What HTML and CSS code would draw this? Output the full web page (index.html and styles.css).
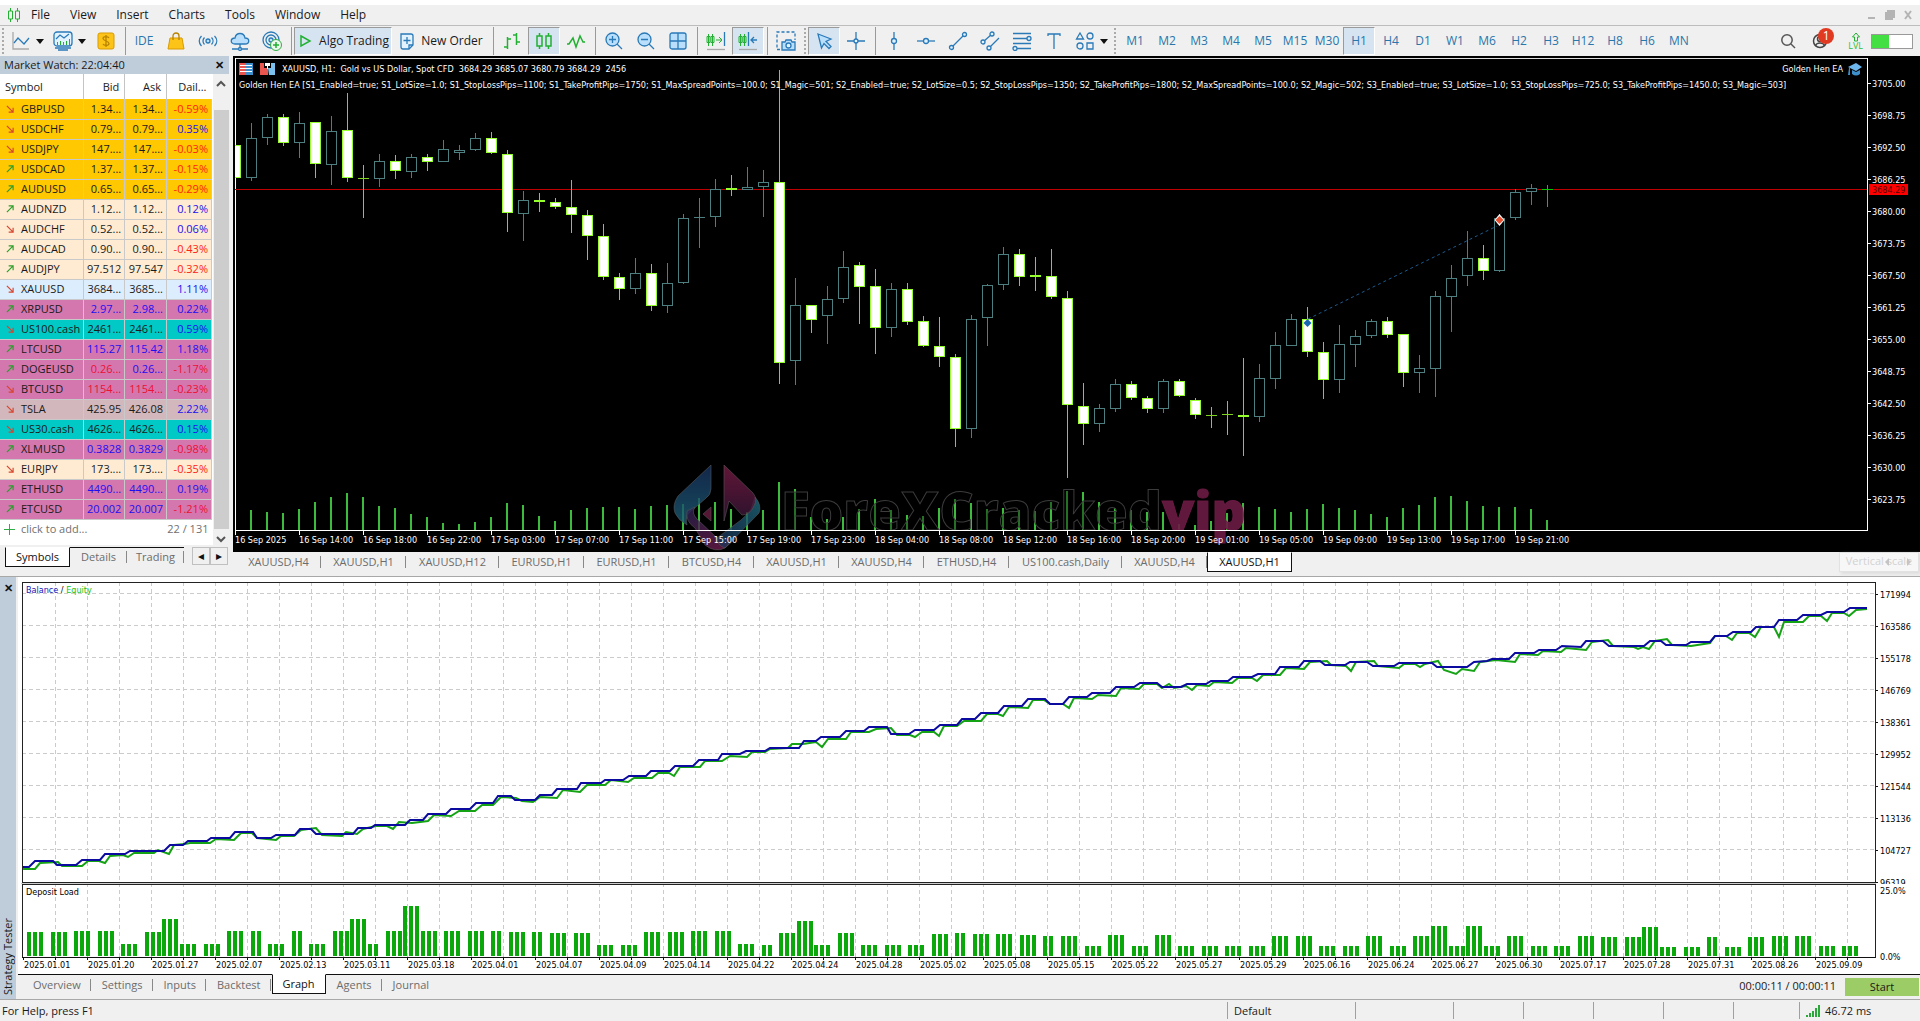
FILE: index.html
```html
<!DOCTYPE html>
<html lang="en">
<head>
<meta charset="utf-8">
<title>XAUUSD,H1</title>
<link rel="stylesheet" href="styles.css">
</head>
<body>
<div class="title-strip"></div>

<nav class="menu-bar" aria-label="Main menu">
  <svg class="app-icon" width="14" height="16" viewBox="0 0 14 16"><path class="g" d="M3.500 1v3M3.500 12v3M10.500 1v3M10.500 12v3M1.500 4h4v8h-4zM8.500 4h4v8h-4z"/></svg>
  <button>File</button><button>View</button><button>Insert</button><button>Charts</button><button>Tools</button><button>Window</button><button>Help</button>
  <div class="window-controls">
    <svg width="12" height="12" viewBox="0 0 12 12"><path d="M2 9h7"/></svg>
    <svg width="12" height="12" viewBox="0 0 12 12"><path d="M2 4h6v6h-6zM4 4V2h6v6h-2M4 6h2v2h-2z"/></svg>
    <svg width="12" height="12" viewBox="0 0 12 12"><path d="M3 2l6 8M9 2l-6 8"/></svg>
  </div>
</nav>

<div class="toolbar" role="toolbar">
  <span class="grip"></span>
  <button class="tool drop" aria-label="Chart type"><svg width="20" height="20" viewBox="0 0 20 20"><path class="n" d="M2 1v17h16"/><path class="b" d="M3 12l4-5 6 6 5-6"/></svg><i class="caret"></i></button>
  <button class="tool drop" aria-label="Indicators"><svg width="20" height="20" viewBox="0 0 20 20"><rect class="bw" x="1" y="1" width="18" height="14" rx="3"/><path class="b" d="M3 8l4-4 4 3 5-4M2 17h16M5 19h10"/><path class="g" d="M4.500 14v-3M7.500 14v-4M10.500 14v-3M13.500 14v-4M16.500 14v-6"/></svg><i class="caret"></i></button>
  <button class="tool" aria-label="Deposit"><svg width="20" height="20" viewBox="0 0 20 20"><rect class="y" x="2" y="2" width="16" height="16" rx="2"/><path class="o" d="M13 7c-1-2-6-2-6 .5S13 10 13 12.500 8 15 7 13M10 4v12"/></svg></button>
  <span class="sep"></span>
  <button class="tool ide">IDE</button>
  <button class="tool" aria-label="Market"><svg width="20" height="20" viewBox="0 0 20 20"><path class="y" d="M4 7h12l2 11H2z"/><path class="o" d="M7 9V5c0-4 6-4 6 0v4"/></svg></button>
  <button class="tool" aria-label="Signals"><svg width="20" height="20" viewBox="0 0 20 20"><circle class="bl" cx="10" cy="10" r="2"/><path class="b" d="M6.500 6.500c-2 2-2 5 0 7M13.500 6.500c2 2 2 5 0 7M3.500 5c-3 3-3 7 0 10M16.500 5c3 3 3 7 0 10"/></svg></button>
  <button class="tool" aria-label="Cloud"><svg width="20" height="20" viewBox="0 0 20 20"><path class="bl" d="M5 13c-5 0-5-6 0-6 1-6 9-6 10 0 5 0 5 6 0 6z"/><path class="b" d="M10 13v4M2 18h6M12 18h6"/><circle class="bl" cx="10" cy="18" r="1.500"/></svg></button>
  <button class="tool" aria-label="Virtual hosting"><svg width="20" height="20" viewBox="0 0 20 20"><circle class="b" cx="9" cy="9" r="8"/><circle class="b" cx="9" cy="9" r="5"/><circle class="bl" cx="9" cy="9" r="2"/><circle cx="14" cy="14" r="5.500" fill="#eef9ee" stroke="#2fae45"/><path class="g2" d="M14 11v6M11 14h6"/></svg></button>
  <span class="sep"></span>
  <button class="tool wide active"><svg width="16" height="18" viewBox="0 0 16 18"><path class="g2" d="M4 4l9 5-9 5z" fill="#e6f8e8"/></svg>Algo Trading</button>
  <button class="tool wide"><svg width="16" height="18" viewBox="0 0 16 18"><path class="bw" d="M2 2h10q2 0 2 2v9l-4 4H4q-2 0-2-2z"/><path class="b" d="M8 5v7M4.500 8.500h7M10 17v-4h4"/></svg>New Order</button>
  <span class="sep"></span>
  <button class="tool" aria-label="Bar chart"><svg width="20" height="20" viewBox="0 0 20 20"><path class="g2" d="M5.500 6v12M2 16h3.500M5.500 8H9M14.500 2v12M11 4h3.500M14.500 11H18"/></svg></button>
  <button class="tool active" aria-label="Candlesticks"><svg width="20" height="20" viewBox="0 0 20 20"><path class="g2" d="M5.500 2v3M5.500 15v3M14.500 2v3M14.500 15v3M3 5h5v10H3zM12 5h5v10h-5z"/></svg></button>
  <button class="tool" aria-label="Line chart"><svg width="20" height="20" viewBox="0 0 20 20"><path class="g2" d="M1 13l2 0 4-6 3 9 4-11 3 6h2"/></svg></button>
  <span class="sep"></span>
  <button class="tool" aria-label="Zoom in"><svg width="20" height="20" viewBox="0 0 20 20"><circle class="bl" cx="8.500" cy="8.500" r="6.500"/><path class="b" d="M8.500 5v7M5 8.500h7M13 13l5 5"/></svg></button>
  <button class="tool" aria-label="Zoom out"><svg width="20" height="20" viewBox="0 0 20 20"><circle class="bl" cx="8.500" cy="8.500" r="6.500"/><path class="b" d="M5 8.500h7M13 13l5 5"/></svg></button>
  <button class="tool" aria-label="Tile windows"><svg width="20" height="20" viewBox="0 0 20 20"><rect class="bl" x="2" y="2" width="16" height="16" rx="2"/><path class="b" d="M10 2v16M2 10h16"/></svg></button>
  <span class="sep"></span>
  <button class="tool" aria-label="Auto scroll"><svg width="20" height="20" viewBox="0 0 20 20"><path class="g" d="M2.500 3v12M6.500 3v12M1 5.500h3v6H1zM5 5.500h3v6H5zM10 9h6M13 6l3 3-3 3"/><path class="b" d="M18.500 1v14"/><path class="n" d="M1 18.500h18"/></svg></button>
  <button class="tool active" aria-label="Chart shift"><svg width="20" height="20" viewBox="0 0 20 20"><path class="g" d="M2.500 3v12M6.500 3v12M1 5.500h3v6H1zM5 5.500h3v6H5z"/><path class="b" d="M10.500 1v14M13 9h6M16 6l-3 3 3 3"/><path class="n" d="M1 18.500h18"/></svg></button>
  <span class="sep"></span>
  <button class="tool" aria-label="Screenshot"><svg width="20" height="20" viewBox="0 0 20 20"><path class="b" stroke-dasharray="3 2" d="M4 18.500H1V1h18v8"/><path class="bl" d="M6 11h3l1-2h5l1 2h3v8H6z"/><circle class="bw" cx="12.500" cy="14.500" r="2.500"/></svg></button>
  <span class="grip"></span>
  <button class="tool active" aria-label="Cursor"><svg width="20" height="20" viewBox="0 0 20 20"><path class="bl" d="M4 3l13 5-5 2.500 5 5-2 2-5-5L7.500 17z"/></svg></button>
  <button class="tool" aria-label="Crosshair"><svg width="20" height="20" viewBox="0 0 20 20"><path class="b" d="M10 1v18M1 10h18"/><circle class="bw" cx="10" cy="10" r="2"/></svg></button>
  <span class="sep"></span>
  <button class="tool" aria-label="Vertical line"><svg width="20" height="20" viewBox="0 0 20 20"><path class="b" d="M10 1v18"/><circle class="bw" cx="10" cy="10" r="2.500"/></svg></button>
  <button class="tool" aria-label="Horizontal line"><svg width="20" height="20" viewBox="0 0 20 20"><path class="b" d="M1 10h18"/><circle class="bw" cx="10" cy="10" r="2.500"/></svg></button>
  <button class="tool" aria-label="Trend line"><svg width="20" height="20" viewBox="0 0 20 20"><path class="b" d="M4 16L16 4"/><circle class="bw" cx="3.500" cy="16.500" r="2"/><circle class="bw" cx="16.500" cy="3.500" r="2"/></svg></button>
  <button class="tool" aria-label="Channel"><svg width="20" height="20" viewBox="0 0 20 20"><path class="b" d="M3 11l9-8M9 17L19 7"/><circle class="bw" cx="3" cy="11" r="2"/><circle class="bw" cx="12" cy="3" r="2"/><circle class="bw" cx="9" cy="17" r="2"/></svg></button>
  <button class="tool" aria-label="Fibonacci"><svg width="20" height="20" viewBox="0 0 20 20"><path class="b" d="M1 2.500h18M1 7.500h18M1 12.500h18M1 17.500h18"/><circle class="bw" cx="17" cy="7.500" r="2"/><circle class="bw" cx="3" cy="17.500" r="2"/></svg></button>
  <button class="tool" aria-label="Text"><svg width="20" height="20" viewBox="0 0 20 20"><path class="b" d="M4 5V3h12v2M10 3v15"/></svg></button>
  <button class="tool drop" aria-label="Objects"><svg width="20" height="20" viewBox="0 0 20 20"><path class="b" d="M5 2l3.500 6h-7zM12 12h6v6h-6z"/><circle class="b" cx="15" cy="5" r="3"/><circle class="b" cx="5" cy="15" r="3"/></svg><i class="caret"></i></button>
  <span class="grip"></span>
  <div class="timeframes">
    <button>M1</button><button>M2</button><button>M3</button><button>M4</button><button>M5</button><button>M15</button><button>M30</button><button class="active">H1</button><button>H4</button><button>D1</button><button>W1</button><button>M6</button><button>H2</button><button>H3</button><button>H12</button><button>H8</button><button>H6</button><button>MN</button>
  </div>
  <div class="account">
    <svg width="16" height="16" viewBox="0 0 16 16"><g fill="none" stroke="#555" stroke-width="1.500"><circle cx="7" cy="7" r="5.200"/><path d="M11 11l4 4"/></g></svg>
    <span class="profile"><svg width="16" height="16" viewBox="0 0 16 16"><g fill="none" stroke="#444" stroke-width="1.500"><circle cx="8" cy="8" r="6.500"/><circle cx="8" cy="6" r="2.500"/><path d="M3.500 13c1-4 8-4 9 0"/></g></svg><b class="badge">1</b></span>
    <span class="level"><svg width="10" height="10" viewBox="0 0 10 10"><path class="g" d="M3.500 9V5H1.500L5 1l3.500 4h-2v4z"/></svg>LVL</span>
    <span class="battery"><i></i></span>
  </div>
</div>

<main class="workspace">
  <section class="market">
    <header class="panel-title"><span>Market Watch: 22:04:40</span><button class="close" aria-label="Close Market Watch">✕</button></header>
    <div class="quotes">
      <table>
        <thead><tr><th class="c-symbol">Symbol</th><th>Bid</th><th>Ask</th><th class="c-daily">Dail...</th></tr></thead>
        <tbody id="quotes"></tbody>
        <tfoot><tr><td><i class="plus"></i>click to add...</td><td colspan="3">22 / 131</td></tr></tfoot>
      </table>
      <div class="scrollbar"><svg width="10" height="8" viewBox="0 0 10 8"><path d="M1 6l4-4 4 4"/></svg><span class="thumb"></span><svg width="10" height="8" viewBox="0 0 10 8"><path d="M1 2l4 4 4-4"/></svg></div>
    </div>
    <div class="market-tabs">
      <button class="tab selected">Symbols</button><button class="tab">Details</button><button class="tab">Trading</button>
      <div class="pager"><button aria-label="Previous tab">◂</button><button aria-label="Next tab">▸</button></div>
    </div>
  </section>

  <section class="chart-pane">
    <div class="chart">
      <svg id="price-chart" class="plot"></svg>
      <div class="chart-info">
        <div class="info-row">
          <svg width="14" height="12" viewBox="0 0 14 12"><path fill="#e8564f" d="M0 0h7v12H0z"/><path fill="#3d8fcc" d="M7 0h7v12H7z"/><path stroke="#fff" d="M1 2.500h12M1 5.500h12M1 8.500h12"/></svg>
          <svg width="15" height="12" viewBox="0 0 15 12"><path fill="#e8564f" d="M0 0h4v5h4v7H0z"/><path fill="#7cc0ee" d="M8 5h3V0h4v12H9z"/><path fill="#fff" d="M5 0h5v3H8v3H7V3H5z"/></svg>
          <span class="info-text">XAUUSD, H1:&nbsp; Gold vs US Dollar, Spot CFD&nbsp; 3684.29 3685.07 3680.79 3684.29&nbsp; 2456</span>
          <span class="expert">Golden Hen EA <svg width="14" height="13" viewBox="0 0 14 13"><path fill="#6db7ee" d="M0 4l8-4 6 4-6 4z"/><path fill="#3d8fcc" d="M4 7l4 2 4-2v4q-4 3-8 0zM1 5h1v7H0z"/></svg></span>
        </div>
        <div class="info-text">Golden Hen EA [S1_Enabled=true; S1_LotSize=1.0; S1_StopLossPips=1100; S1_TakeProfitPips=1750; S1_MaxSpreadPoints=100.0; S1_Magic=501; S2_Enabled=true; S2_LotSize=0.5; S2_StopLossPips=1350; S2_TakeProfitPips=1800; S2_MaxSpreadPoints=100.0; S2_Magic=502; S3_Enabled=true; S3_LotSize=1.0; S3_StopLossPips=725.0; S3_TakeProfitPips=1450.0; S3_Magic=503]</div>
      </div>
    </div>
    <div class="chart-tabs">
      <button class="tab">XAUUSD,H4</button><button class="tab">XAUUSD,H1</button><button class="tab long">XAUUSD,H12</button><button class="tab">EURUSD,H1</button><button class="tab">EURUSD,H1</button><button class="tab">BTCUSD,H4</button><button class="tab">XAUUSD,H1</button><button class="tab">XAUUSD,H4</button><button class="tab">ETHUSD,H4</button><button class="tab daily">US100.cash,Daily</button><button class="tab">XAUUSD,H4</button><button class="tab selected">XAUUSD,H1</button>
      <span class="ghost-tip">Vertical scale<svg width="28" height="8" viewBox="0 0 28 8"><path d="M5 0v8L1 4zM23 0v8l4-4z"/></svg></span>
    </div>
  </section>
</main>

<section class="tester">
  <aside class="tester-side"><button class="close" aria-label="Close Strategy Tester">✕</button><span>Strategy Tester</span></aside>
  <div class="tester-body">
    <div class="tester-plot"><svg id="tester-chart" class="plot"></svg></div>
    <div class="tester-tabs">
      <button class="tab">Overview</button><button class="tab">Settings</button><button class="tab">Inputs</button><button class="tab">Backtest</button><button class="tab selected">Graph</button><button class="tab">Agents</button><button class="tab last">Journal</button>
      <span class="elapsed">00:00:11 / 00:00:11</span><button class="start">Start</button>
    </div>
  </div>
</section>

<footer class="status">
  <span class="help">For Help, press F1</span>
  <span class="s128">Default</span><span class="s98"></span><span class="s70"></span><span class="s70"></span><span class="s70"></span><span class="s70"></span><span class="s66"></span>
  <span class="ping"><svg width="14" height="12" viewBox="0 0 14 12"><path stroke="#2aa83a" stroke-width="2" d="M1 12v-2M4 12V8M7 12V6M10 12V3M13 12V0"/></svg>46.72 ms</span>
</footer>
<script src="app.js"></script>
</body>
</html>
```
FILE: styles.css
```css
* { box-sizing: border-box; }
body {
  margin: 0;
  height: 100vh;
  min-height: 800px;
  display: flex;
  flex-direction: column;
  background: #f0f0f0;
  color: #1a1a1a;
  font: 11px/16px "Open Sans", "Noto Sans", sans-serif;
  overflow: hidden;
}
button {
  margin: 0;
  padding: 0;
  border: 0;
  background: none;
  color: inherit;
  font: inherit;
  white-space: nowrap;
}
svg { flex: none; }

.title-strip { height: 5px; background: #fff; flex: none; }

/* menu */
.menu-bar {
  height: 21px;
  flex: none;
  display: flex;
  align-items: center;
  padding-left: 7px;
  border-bottom: 1px solid #bdbdbd;
}
.menu-bar button { padding: 0 10px; font-size: 12px; }
.window-controls { margin-left: auto; display: flex; gap: 6px; padding-right: 6px; }
.window-controls svg { fill: none; stroke: #b4b4b4; stroke-width: 2; }

/* toolbar */
.toolbar {
  height: 30px;
  flex: none;
  display: flex;
  align-items: stretch;
  padding: 1px 0;
  font-size: 12px;
}
.tool {
  width: 32px;
  display: flex;
  align-items: center;
  justify-content: center;
  border: 1px solid transparent;
}
.drop { width: 42px; gap: 5px; }
.wide { width: 98px; gap: 6px; }
.ide { color: #2a76ab; }
.active { background: #d6e4f1; border-color: #9a9a9a #fff #fff #9a9a9a; }
.sep { width: 6px; background: linear-gradient(#999, #999) center / 1px 100% no-repeat; }
.grip { width: 6px; margin: 1px 0; background: repeating-linear-gradient(#aaa 0 2px, transparent 2px 4px) center / 2px 100% no-repeat; }
.caret { border: 4px solid transparent; border-top: 5px solid #111; border-bottom: 0; }
.timeframes { display: flex; margin-left: 1px; }
.timeframes button { width: 32px; color: #2a76ab; border: 1px solid transparent; }
.timeframes .active { border-color: #9a9a9a #fff #fff #9a9a9a; }
.account { margin-left: auto; display: flex; align-items: center; padding-right: 7px; gap: 16px; }
.profile { position: relative; display: flex; }
.badge {
  position: absolute;
  left: 6px;
  top: -5px;
  width: 16px;
  height: 16px;
  border-radius: 50%;
  background: #e03a22;
  color: #fff;
  font-weight: 400;
  text-align: center;
  line-height: 16px;
}
.level { display: flex; flex-direction: column; align-items: center; color: #2fbf3a; font-size: 9px; line-height: 8px; margin-left: 4px; }
.battery { width: 42px; height: 15px; border: 1px solid #999; background: #fff; display: flex; margin-left: -8px; }
.battery i { width: 42%; background: #43df43; }

.b, .bl, .bw, .g, .g2, .n, .o { fill: none; stroke: #2a7ab8; stroke-width: 1.3; }
.bl { fill: #b9dffc; }
.bw { fill: #e3f2ff; }
.g { stroke: #22b032; stroke-width: 1; }
.g2 { stroke: #22b032; stroke-width: 1.5; }
.n { stroke: #a9a9a9; }
.y { fill: #fcc419; stroke: #d99b00; }
.o { stroke: #b88300; }

/* workspace */
.workspace { flex: 521 1 0; min-height: 0; display: flex; border-bottom: 1px solid #a8a8a8; }
.market { width: 233px; flex: none; display: flex; flex-direction: column; padding-right: 4px; }
.panel-title {
  height: 18px;
  flex: none;
  display: flex;
  align-items: center;
  justify-content: space-between;
  padding: 0 5px 0 4px;
  background: #bfcddb;
}
.close { color: #111; font-weight: 700; font-size: 11px; line-height: 14px; }
.quotes { flex: 1; min-height: 0; display: flex; background: #fff; overflow: hidden; margin-bottom: 2px; }
table { width: 212px; border-collapse: collapse; table-layout: fixed; align-self: flex-start; }
th { height: 25px; font-weight: 400; text-align: right; padding: 0 5px; border-right: 1px solid #c4c4c4; }
th:last-child { border-right: 0; }
.c-symbol { width: 83px; text-align: left; }
.c-daily { width: 45px; }
td { height: 20px; padding: 0 3px; text-align: right; border: 0 solid #c9c9c9; border-width: 0 1px 1px 0; white-space: nowrap; line-height: 14px; }
tbody td:first-child { text-align: left; padding-left: 6px; }
td svg { width: 8px; height: 8px; margin-right: 7px; fill: none; stroke-width: 1.3; }
.major td { background: #ffc800; }
.minor td { background: #ffebd2; }
.metal td { background: #dcedfd; }
.crypto td { background: #d377ae; }
.index td { background: #00c9c6; }
.stock td { background: #d2b8bc; }
tbody .up { color: #1c0ff0; }
tbody .down { color: #ff2213; }
.crypto .down { color: #ee0f35; }
tfoot td { border: 0; color: #707070; height: 20px; }
tfoot td:first-child { text-align: left; padding-left: 4px; }
.plus { display: inline-block; width: 11px; height: 11px; margin-right: 6px; vertical-align: -2px; background: linear-gradient(#2fae45, #2fae45) center / 100% 1px no-repeat, linear-gradient(#2fae45, #2fae45) center / 1px 100% no-repeat; }
.scrollbar { width: 16px; margin-left: 1px; background: #f0f0f0; display: flex; flex-direction: column; align-items: center; padding: 6px 0 2px; gap: 6px; }
.scrollbar svg { fill: none; stroke: #555; stroke-width: 2; }
.thumb { flex: 1; width: 15px; background: #cdcdcd; margin: 16px 0 0; }

.tab { color: #6c6c6c; height: 20px; }
.tab.selected { background: #fff; color: #111; border: 1px solid #111; border-top-color: #fff; }
.market-tabs { height: 29px; flex: none; display: flex; align-items: flex-start; padding-left: 5px; }
.market-tabs .tab { width: 57px; box-shadow: inset 0 1px #111; }
.market-tabs .selected { width: 65px; box-shadow: none; }
.pager { margin-left: auto; display: flex; margin-right: 1px; }
.pager button { width: 18px; height: 18px; border: 1px solid #c0c0c0; color: #111; font-size: 12px; line-height: 14px; font-family: "DejaVu Sans", sans-serif; }

.chart-pane { flex: 1; min-width: 0; display: flex; flex-direction: column; }
.chart { flex: 1; min-height: 0; background: #000; position: relative; }
.plot { display: block; width: 100%; height: 100%; }
.chart-info { position: absolute; left: 6px; right: 58px; top: 5px; color: #fff; font-family: "DejaVu Sans Condensed", "DejaVu Sans", sans-serif; font-size: 9px; }
.info-row { display: flex; align-items: center; gap: 7px; height: 16px; }
.info-text { white-space: pre; }
.expert { margin-left: auto; display: flex; align-items: center; gap: 5px; }
.chart-tabs { height: 24px; flex: none; display: flex; padding-left: 3px; }
.chart-tabs .tab { width: 85px; }
.chart-tabs .long { width: 93px; }
.chart-tabs .daily { width: 113px; }
.chart-tabs .tab, .market-tabs .tab, .tester-tabs .tab { background-image: linear-gradient(#888, #888); background-size: 1px 12px; background-position: right center; background-repeat: no-repeat; }
.chart-tabs .tab.selected, .market-tabs .tab.selected, .tester-tabs .tab.selected, .tester-tabs .last { background-image: none; }
.ghost-tip {
  position: relative;
  margin-left: auto;
  width: 80px;
  height: 20px;
  margin-right: 1px;
  background: #f7f7f7;
  border: 1px solid #e2e2e2;
  box-shadow: 2px 2px 3px #ddd;
  color: #d2d2d2;
  text-align: center;
}
.ghost-tip svg { position: absolute; right: 6px; top: 5px; fill: #c4c4c4; }

/* tester */
.tester { flex: 423 1 0; min-height: 0; display: flex; border-bottom: 1px solid #a8a8a8; }
.tester-side { width: 16px; margin-right: 2px; background: #bfcddb; display: flex; flex-direction: column; align-items: center; justify-content: space-between; padding: 4px 0; }
.tester-side span { writing-mode: vertical-rl; transform: rotate(180deg); }
.tester-body { flex: 1; min-width: 0; display: flex; flex-direction: column; }
.tester-plot { flex: 1; min-height: 0; background: #fff; }
.tester-tabs { height: 25px; flex: none; display: flex; align-items: flex-start; gap: 1px; padding: 0 1px 0 5px; border-top: 1px solid #111; }
.tester-tabs .tab { padding: 0 10px; }
.tester-tabs .selected { margin-top: -1px; height: 20px; }
.elapsed { margin: 3px 8px 0 auto; }
.start { width: 74px; height: 18px; margin-top: 3px; background: #9ccc65; }

/* status bar */
.status { height: 21px; flex: none; display: flex; align-items: center; line-height: 17px; }
.status span { height: 17px; }
.status .help { flex: 1; padding-left: 2px; }
.status span + span { border-left: 1px solid #a0a0a0; padding-left: 6px; }
.s128 { width: 128px; }
.s98 { width: 98px; }
.s70 { width: 70px; }
.s66 { width: 66px; }
.ping { width: 121px; display: flex; align-items: center; gap: 5px; }

/* svg text */
svg text { font: 9px "DejaVu Sans Condensed", "DejaVu Sans", sans-serif; }
#price-chart text { fill: #fff; }
#price-chart .mark { font: 800 53px "Open Sans", sans-serif; fill: #000; fill-opacity: 0.4; stroke: #3c3c3c; stroke-width: 1; }
#price-chart .mark-vip { fill: #6b1b44; fill-opacity: 0.9; stroke: #6b1b44; }
```
FILE: app.js
```js
const quotes = [
  ['major', 0, 'GBPUSD', '1.34...', '1.34...', '-0.59%'],
  ['major', 0, 'USDCHF', '0.79...', '0.79...', '0.35%'],
  ['major', 0, 'USDJPY', '147....', '147....', '-0.03%'],
  ['major', 1, 'USDCAD', '1.37...', '1.37...', '-0.15%'],
  ['major', 1, 'AUDUSD', '0.65...', '0.65...', '-0.29%'],
  ['minor', 1, 'AUDNZD', '1.12...', '1.12...', '0.12%'],
  ['minor', 0, 'AUDCHF', '0.52...', '0.52...', '0.06%'],
  ['minor', 1, 'AUDCAD', '0.90...', '0.90...', '-0.43%'],
  ['minor', 1, 'AUDJPY', '97.512', '97.547', '-0.32%'],
  ['metal', 0, 'XAUUSD', '3684...', '3685...', '1.11%'],
  ['crypto', 1, 'XRPUSD', '2.97...', '2.98...', '0.22%', 'up', 'up'],
  ['index', 0, 'US100.cash', '2461...', '2461...', '0.59%'],
  ['crypto', 1, 'LTCUSD', '115.27', '115.42', '1.18%', 'up', 'up'],
  ['crypto', 1, 'DOGEUSD', '0.26...', '0.26...', '-1.17%', 'down', 'up'],
  ['crypto', 0, 'BTCUSD', '1154...', '1154...', '-0.23%', 'down', 'down'],
  ['stock', 0, 'TSLA', '425.95', '426.08', '2.22%'],
  ['index', 0, 'US30.cash', '4626...', '4626...', '0.15%'],
  ['crypto', 1, 'XLMUSD', '0.3828', '0.3829', '-0.98%', 'up', 'up'],
  ['minor', 0, 'EURJPY', '173....', '173....', '-0.35%'],
  ['crypto', 1, 'ETHUSD', '4490...', '4490...', '0.19%', 'up', 'up'],
  ['crypto', 1, 'ETCUSD', '20.002', '20.007', '-1.21%', 'up', 'up'],
];
document.getElementById('quotes').innerHTML = quotes.map(([kind, rising, name, bid, ask, daily, bc = '', ac = '']) => {
  const arrow = rising
    ? '<svg viewBox="0 0 9 9" stroke="#2b9e2b"><path d="M1 8l7-7M3 1h5v5"/></svg>'
    : '<svg viewBox="0 0 9 9" stroke="#d8452e"><path d="M1 1l7 7M8 3v5H3"/></svg>';
  return `<tr class="${kind}"><td>${arrow}${name}</td><td class="${bc}">${bid}</td><td class="${ac}">${ask}</td><td class="${daily[0] === '-' ? 'down' : 'up'}">${daily}</td></tr>`;
}).join('');

// Candles: kind (f falling, r rising, d doji), body top, body bottom, high, low
const candles = `f 145 178 145 178|r 138 178 123 181|r 117 138 114 145|f 117 143 114 146|r 123 143 112 158|f 122 164 122 178|r 131 165 116 185|f 130 178 93 182|d 178 179 165 218|r 161 179 154 187|f 161 171 155 179|r 157 172 154 178|f 157 162 154 171|r 149 162 140 162|r 150 153 145 160|r 138 150 133 151|f 138 153 132 154|f 154 213 150 232|r 200 214 191 241|f 200 202 193 212|f 202 207 198 209|f 207 215 180 233|f 215 236 210 260|f 236 277 224 280|f 277 289 273 300|r 273 289 258 294|f 273 306 264 311|r 283 306 263 313|r 218 283 214 284|r 217 217 198 248|r 189 217 179 227|f 188 190 175 196|r 187 190 167 190|r 182 187 170 217|f 182 363 70 384|r 305 361 278 385|f 305 320 305 333|r 299 316 286 344|r 267 299 251 303|f 265 287 262 324|f 286 328 269 354|r 289 328 283 337|f 289 322 283 325|f 321 346 316 347|f 346 357 317 367|f 357 429 354 447|r 319 429 315 438|r 285 318 284 346|r 254 285 247 290|f 254 277 249 286|f 275 277 257 291|f 276 297 249 299|f 298 405 291 478|f 406 424 383 445|r 408 424 404 432|r 384 409 379 412|f 384 398 381 400|f 398 409 396 413|r 381 409 379 413|f 381 396 379 397|f 400 415 398 419|d 415 415 407 428|d 414 414 401 435|f 415 417 358 456|r 378 417 364 422|r 345 379 332 389|r 319 346 314 346|f 319 352 307 357|f 352 380 342 399|r 344 380 325 393|r 336 345 330 367|r 321 336 319 338|f 321 335 317 338|f 334 373 334 387|r 368 373 355 393|r 296 369 291 397|r 278 297 265 332|r 258 276 231 286|f 258 271 245 280|r 218 271 214 272|r 192 218 189 220|r 188 192 184 205|g 189 189 185 207`
  .split('|').map(s => s.split(' '));
const volumes = [0,20,18,17,21,28,33,37,33,24,22,16,13,7,6,8,13,27,25,14,9,20,22,23,23,21,24,25,26,32,28,21,18,20,48,41,13,11,13,21,31,20,15,14,22,31,27,21,22,20,19,28,39,38,28,22,20,18,18,6,5,9,17,27,23,21,18,21,26,22,20,16,13,22,25,33,34,29,24,23,23,21,10];
const barDates = ['16 Sep 2025','16 Sep 14:00','16 Sep 18:00','16 Sep 22:00','17 Sep 03:00','17 Sep 07:00','17 Sep 11:00','17 Sep 15:00','17 Sep 19:00','17 Sep 23:00','18 Sep 04:00','18 Sep 08:00','18 Sep 12:00','18 Sep 16:00','18 Sep 20:00','19 Sep 01:00','19 Sep 05:00','19 Sep 09:00','19 Sep 13:00','19 Sep 17:00','19 Sep 21:00'];

const rect = (x, y, w, h, fill, extra = '') => `<rect x="${x}" y="${y}" width="${w}" height="${h}" fill="${fill}" ${extra}/>`;
const text = (x, y, s, extra = '') => `<text x="${x}" y="${y}" ${extra}>${s}</text>`;

function drawPrice() {
  const svg = document.getElementById('price-chart');
  const { width: W, height: H } = svg.getBoundingClientRect();
  const Y = v => Math.round((v - 56) * H / 496);
  const left = 2, right = Math.round(W) - 53, base = Y(530);
  let out = '';
  out += rect(left, 2, right - left, 1, '#ddd') + rect(left, 2, 1, base - 2, '#fff');
  out += rect(left, Y(189), right - left, 1, '#c00000');
  volumes.forEach((v, i) => { if (v) out += rect(left + i * 16 - 1, base - v, 2, v, '#3dbb3d'); });
  candles.forEach(([k, t, b, h, l], i) => {
    const x = left + i * 16, top = Y(t), bh = Math.max(Y(b) - top, 1);
    const line = k === 'r' ? '#4e7f80' : k === 'g' ? '#0c0' : '#7fd421';
    out += rect(x, Y(h), 1, Math.max(Y(l) - Y(h), 1), line);
    if (k === 'd' || k === 'g' || bh < 2) out += rect(x - 5, top, 11, bh, line);
    else out += `<rect x="${x - 4.5}" y="${top + .5}" width="10" height="${bh - 1 || 1}" fill="${k === 'f' ? '#fff' : '#000'}" stroke="${k === 'f' ? '#96ff2e' : '#4e7f80'}"/>`;
  });
  out += rect(0, 0, 2, H, '#000');
  out += `<path d="M1075 ${Y(319)}L1264 ${Y(226)}" stroke="#1d5a8e" stroke-dasharray="3 3"/>`;
  out += `<path d="M1074.500 ${Y(319)}l4 4-4 4-4-4z" fill="#1767b0"/><path d="M1266.500 ${Y(214)}l5 6-5 6-5-6z" fill="#fff"/><path d="M1266.500 ${Y(216)}l4 4-4 4-4-4z" fill="#e4502f"/>`;
  out += `<g transform="translate(440 ${Y(530) - 67})" stroke="#555" stroke-width=".6" fill-opacity=".8">
    <path fill="url(#teal)" d="M38 2L5 33Q-1 42 2 50Q5 57 14 62Q12 54 16 50L32 36Q38 32 38 26Z"/>
    <path fill="url(#rose)" d="M14 48Q12 58 22 65L32 82Q42 90 52 85L62 76L44 75L24 56Q18 50 22 44Z"/>
    <path fill="url(#teal2)" d="M82 34Q89 42 86 50L52 85Q44 82 44 75L68 57Q74 52 78 46Z"/>
    <path fill="url(#wine)" d="M51 2L80 30Q85 36 81 43Q77 52 69 52L56 38L51 58Z"/>
    <path fill="#6b1b44" d="M30 51L38 44V58Z"/></g>
    <defs><linearGradient id="teal" x2="0" y2="1"><stop stop-color="#17305e"/><stop offset="1" stop-color="#1c6074"/></linearGradient>
    <linearGradient id="rose" x2="1" y2="1"><stop stop-color="#2a2352"/><stop offset="1" stop-color="#7c1c4c"/></linearGradient>
    <linearGradient id="teal2" x1="0" x2="1" y1="1" y2="0"><stop stop-color="#1c2c52"/><stop offset="1" stop-color="#1c6b7c"/></linearGradient>
    <linearGradient id="wine" x2="0" y2="1"><stop stop-color="#7a1c44"/><stop offset="1" stop-color="#351638"/></linearGradient></defs>`;
  out += `<text class="mark" x="548" y="${base}">ForeXCracked<tspan class="mark-vip">vip</tspan></text>`;
  out += rect(left, base, right - left + 1, 1, '#fff') + rect(right, 2, 1, base - 2, '#fff');
  barDates.forEach((d, i) => { out += rect(left + i * 64, base, 1, 5, '#fff') + text(left + i * 64, base + 13, d); });
  for (let i = 0; i < 14; i++) {
    const y = Y(83 + i * 32);
    out += rect(right, y, 4, 1, '#fff') + text(right + 5, y + 4, (3705 - i * 6.25).toFixed(2));
  }
  out += rect(right + 2, Y(184), 39, 11, '#f00') + text(right + 5, Y(189) + 4, '3684.29', 'style="fill:#500"');
  svg.innerHTML = `<g>${out}</g>`;
}

const balance = '23,867 29,867 35,861 53,861 57,865 76,865 82,860 100,860 105,854 125,854 130,851 164,851 170,845 183,845 188,841 207,841 211,838 230,838 235,832 253,832 257,838 271,838 276,835 295,835 300,829 311,829 316,834 353,834 358,828 371,828 375,825 405,825 410,820 423,820 428,814 446,814 451,809 470,809 476,803 493,803 498,796 511,796 515,800 535,800 540,795 552,795 557,789 577,789 581,783 601,783 605,780 623,780 629,776 646,776 651,771 670,771 675,766 693,766 699,760 718,760 722,754 740,754 746,751 765,751 770,748 799,748 804,741 816,741 821,737 840,737 846,731 864,731 869,727 887,727 891,734 909,734 915,730 934,730 940,725 957,725 962,719 975,719 981,713 998,713 1004,706 1022,706 1028,699 1045,699 1050,704 1063,704 1069,697 1087,697 1092,693 1110,693 1116,687 1134,687 1140,683 1157,683 1162,687 1181,687 1187,684 1206,684 1211,681 1228,681 1233,677 1252,677 1258,674 1275,674 1280,667 1299,667 1304,661 1320,661 1325,665 1345,665 1350,662 1367,662 1373,666 1394,666 1399,663 1432,663 1437,667 1467,667 1474,662 1487,661 1492,659 1509,659 1515,653 1534,653 1539,650 1556,650 1562,646 1581,647 1586,641 1603,641 1609,646 1644,646 1650,641 1661,641 1666,645 1686,645 1691,642 1710,642 1715,636 1727,636 1733,632 1751,632 1756,627 1774,627 1779,620 1797,620 1803,615 1821,615 1827,612 1844,612 1850,608 1867,608';
const equity = '23,869 35,869 40,863 58,862 62,866 82,866 88,861 99,861 105,863 110,856 123,855 128,857 134,853 154,853 158,850 169,854 174,845 185,844 190,843 210,843 216,839 234,840 241,833 252,833 257,838 276,840 281,836 294,836 301,830 316,828 322,835 342,836 346,832 357,834 363,829 376,826 387,826 393,829 399,822 412,823 428,821 434,815 451,816 459,811 475,811 482,805 493,805 501,797 516,798 522,801 533,802 540,797 557,798 563,790 580,792 587,785 605,785 611,780 628,782 634,778 652,778 658,773 669,773 674,776 680,767 700,767 705,761 722,761 730,756 747,757 752,752 765,752 770,749 788,748 792,744 803,744 816,742 822,747 828,739 846,739 851,732 869,732 876,729 891,728 897,735 910,735 915,737 922,732 934,732 939,736 944,726 957,726 964,721 981,721 987,714 998,714 1003,716 1009,707 1028,708 1033,700 1044,700 1050,704 1063,704 1069,708 1074,698 1092,699 1098,695 1116,696 1121,688 1139,689 1144,684 1157,684 1162,688 1169,684 1174,688 1186,686 1192,690 1197,685 1209,686 1214,682 1232,683 1238,678 1252,678 1257,681 1263,675 1280,675 1286,668 1304,669 1310,662 1327,661 1331,665 1346,666 1351,671 1356,662 1374,661 1378,666 1399,668 1404,664 1415,664 1420,667 1425,664 1438,661 1444,670 1456,674 1462,669 1474,671 1480,662 1496,660 1515,662 1520,654 1538,655 1543,651 1561,652 1566,648 1586,650 1592,642 1608,640 1613,646 1634,647 1638,649 1643,647 1649,649 1655,641 1667,639 1672,645 1691,646 1710,643 1715,636 1726,636 1732,640 1737,633 1749,633 1755,637 1761,627 1774,627 1779,637 1784,622 1803,622 1809,616 1821,616 1827,621 1832,613 1844,613 1849,616 1856,610 1867,609';
// Deposit load groups: left, bars, height
const load = '27,3,24;51,3,24;74,3,25;98,3,25;121,3,12;145,3,24;162,3,37;180,3,12;204,3,12;227,3,25;251,2,25;268,3,12;292,2,25;309,3,12;333,3,25;350,3,37;368,2,12;386,3,25;403,3,50;421,3,25;444,3,25;468,3,25;491,2,25;509,3,24;532,2,24;550,3,23;574,3,23;597,3,11;621,3,11;644,3,24;668,3,24;691,3,25;715,3,25;738,3,12;762,2,11;779,3,23;797,3,35;814,3,11;838,3,23;861,3,11;885,3,11;908,3,11;932,3,22;955,2,23;973,3,22;996,3,22;1020,3,21;1043,2,20;1061,3,20;1085,3,10;1108,3,21;1132,3,10;1155,3,21;1178,3,10;1202,3,10;1225,3,10;1249,3,10;1272,3,20;1296,3,20;1319,3,10;1343,3,10;1366,3,20;1390,3,10;1413,3,20;1431,3,30;1449,3,10;1466,3,30;1484,3,10;1507,3,20;1531,3,10;1554,3,10;1578,3,20;1601,3,19;1625,3,19;1642,3,29;1660,3,9;1684,3,9;1707,2,19;1725,3,9;1748,3,19;1772,3,20;1795,3,20;1819,3,10;1842,3,10'
  .split(';').map(s => s.split(',').map(Number));
const testDates = '01.01 01.20 01.27 02.07 02.13 03.11 03.18 04.01 04.07 04.09 04.14 04.22 04.24 04.28 05.02 05.08 05.15 05.22 05.27 05.29 06.16 06.24 06.27 06.30 07.17 07.28 07.31 08.26 09.09'.split(' ');
const levels = [171994, 163586, 155178, 146769, 138361, 129952, 121544, 113136, 104727, 96319];

function drawTester() {
  const svg = document.getElementById('tester-chart');
  const { width: W, height: H } = svg.getBoundingClientRect();
  const X = v => Math.round((v - 18) * W / 1902);
  const Y = v => Math.round((v - 577) * H / 397);
  const L = X(22), R = X(1875), top = Y(582), mid = Y(882), mid2 = Y(884), base = Y(957);
  const pts = s => s.split(' ').map(p => { const [x, y] = p.split(',').map(Number); return `${X(x)},${Y(y)}`; }).join(' ');
  let out = '';
  const grid = [];
  for (let k = 1; k <= 57; k++) grid.push(`M${X(23 + 32 * k) + .5} ${top}V${base}`);
  levels.slice(0, 9).forEach((_, i) => grid.push(`M${L} ${Y(594 + 32 * i) - .5}H${R}`));
  out += `<path d="${grid.join('')}" stroke="#cbcbcb" stroke-dasharray="4 3" fill="none"/>`;
  out += `<polyline points="${pts(equity)}" fill="none" stroke="#15a315" stroke-width="2"/><polyline points="${pts(balance)}" fill="none" stroke="#0b0ba0" stroke-width="2"/>`;
  load.forEach(([x, n, h]) => { for (let i = 0; i < n; i++) out += rect(X(x + i * 6), Y(956 - h), 4, Y(956) - Y(956 - h), '#0aa80a'); });
  levels.forEach((v, i) => { out += rect(R, Y(594 + 32 * i), 3, 1, '#111') + text(R + 5, Y(594 + 32 * i) + 4, v); });
  out += rect(R + 1, mid2, W - R, 40, '#fff');
  out += text(R + 5, mid2 + 10, '25.0%') + text(R + 5, base + 3, '0.0%');
  out += rect(L, top, R - L, 1, '#222') + rect(L, mid, R - L, 1, '#222') + rect(L, mid2, R - L, 1, '#222') + rect(L, base, R - L, 1, '#111');
  out += rect(L, top, 1, base - top, '#222') + rect(R, top, 1, base - top + 1, '#222') + rect(L - 1, mid + 1, R - L + 2, 1, '#ccc');
  for (let k = 0; k <= 57; k++) out += rect(X(23 + 32 * k), base, 1, 3, '#111');
  testDates.forEach((d, i) => { out += text(X(24 + 64 * i), base + 11, '2025.' + d); });
  out += `<text x="${L + 4}" y="${top + 11}"><tspan fill="#1414b8">Balance</tspan> / <tspan fill="#15c415">Equity</tspan></text>`;
  out += text(L + 4, mid2 + 11, 'Deposit Load');
  svg.innerHTML = out;
}

function draw() { drawPrice(); drawTester(); }
addEventListener('resize', draw);
draw();
```
